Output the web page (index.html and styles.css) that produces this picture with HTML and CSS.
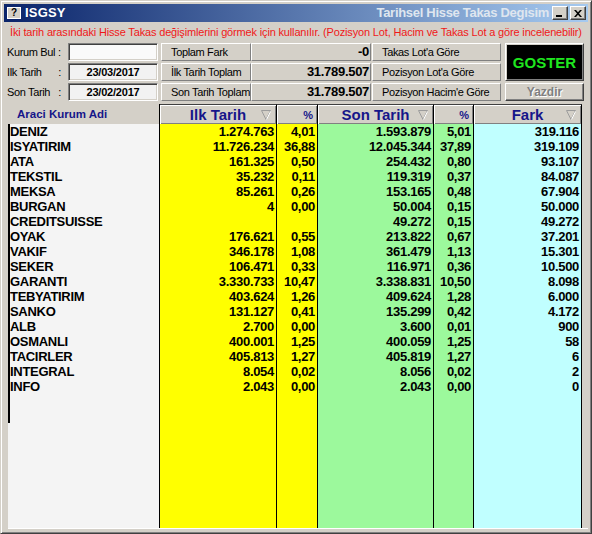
FILE: index.html
```html
<!DOCTYPE html>
<html lang="tr">
<head>
<meta charset="utf-8">
<title>ISGSY</title>
<link rel="stylesheet" href="styles.css">
</head>
<body>
<div class="window">
  <div class="titlebar">
    <span class="app-icon">?</span>
    <span class="title">ISGSY</span>
    <span class="subtitle">Tarihsel Hisse Takas Degisim</span>
    <span class="tbtn"><svg width="8" height="7" viewBox="0 0 8 7"><rect x="0" y="5" width="6" height="2" fill="#000"/></svg></span>
    <span class="tbtn"><svg width="8" height="7" viewBox="0 0 8 7"><path d="M0 0h2l2 2.3L6 0h2L5 3.5 8 7H6L4 4.7 2 7H0l3-3.5z" fill="#000"/></svg></span>
  </div>
  <div class="client">
    <p class="hint">İki tarih arasındaki Hisse Takas değişimlerini görmek için kullanılır. (Pozisyon Lot, Hacim ve Takas Lot a göre incelenebilir)</p>
    <div class="controls">
      <span class="lbl">Kurum Bul :</span>
      <div class="field blank"></div>
      <div class="btn">Toplam Fark</div>
      <div class="val">-0</div>
      <div class="btn wide">Takas Lot'a Göre</div>
      <div class="goster">GOSTER</div>

      <span class="lbl">Ilk Tarih<span class="colon">:</span></span>
      <div class="field">23/03/2017</div>
      <div class="btn">İlk Tarih Toplam</div>
      <div class="val">31.789.507</div>
      <div class="btn wide">Pozisyon Lot'a Göre</div>

      <span class="lbl">Son Tarih<span class="colon">:</span></span>
      <div class="field">23/02/2017</div>
      <div class="btn">Son Tarih Toplam</div>
      <div class="val">31.789.507</div>
      <div class="btn wide">Pozisyon Hacim'e Göre</div>
      <div class="btn yazdir">Yazdir</div>
    </div>
    <div class="panel">
      <div class="table">
        <div class="h-name">Araci Kurum Adi</div>
        <div class="h"><span></span><span>Ilk Tarih</span><svg class="sort" width="10" height="10" viewBox="0 0 10 10"><path d="M0.5 0.5H9.5L5 9.5Z" fill="none" stroke="#9c9c9c"/><path d="M9.5 1.5L5.5 9.5" stroke="#fff"/></svg></div>
        <div class="h-pct">%</div>
        <div class="h"><span></span><span>Son Tarih</span><svg class="sort" width="10" height="10" viewBox="0 0 10 10"><path d="M0.5 0.5H9.5L5 9.5Z" fill="none" stroke="#9c9c9c"/><path d="M9.5 1.5L5.5 9.5" stroke="#fff"/></svg></div>
        <div class="h-pct">%</div>
        <div class="h"><span></span><span>Fark</span><svg class="sort" width="10" height="10" viewBox="0 0 10 10"><path d="M0.5 0.5H9.5L5 9.5Z" fill="none" stroke="#9c9c9c"/><path d="M9.5 1.5L5.5 9.5" stroke="#fff"/></svg></div>

        <div class="c name">DENIZ</div><div class="c y">1.274.763</div><div class="c y">4,01</div><div class="c g">1.593.879</div><div class="c g">5,01</div><div class="c cy">319.116</div>
        <div class="c name">ISYATIRIM</div><div class="c y">11.726.234</div><div class="c y">36,88</div><div class="c g">12.045.344</div><div class="c g">37,89</div><div class="c cy">319.109</div>
        <div class="c name">ATA</div><div class="c y">161.325</div><div class="c y">0,50</div><div class="c g">254.432</div><div class="c g">0,80</div><div class="c cy">93.107</div>
        <div class="c name">TEKSTIL</div><div class="c y">35.232</div><div class="c y">0,11</div><div class="c g">119.319</div><div class="c g">0,37</div><div class="c cy">84.087</div>
        <div class="c name">MEKSA</div><div class="c y">85.261</div><div class="c y">0,26</div><div class="c g">153.165</div><div class="c g">0,48</div><div class="c cy">67.904</div>
        <div class="c name">BURGAN</div><div class="c y">4</div><div class="c y">0,00</div><div class="c g">50.004</div><div class="c g">0,15</div><div class="c cy">50.000</div>
        <div class="c name">CREDITSUISSE</div><div class="c y"></div><div class="c y"></div><div class="c g">49.272</div><div class="c g">0,15</div><div class="c cy">49.272</div>
        <div class="c name">OYAK</div><div class="c y">176.621</div><div class="c y">0,55</div><div class="c g">213.822</div><div class="c g">0,67</div><div class="c cy">37.201</div>
        <div class="c name">VAKIF</div><div class="c y">346.178</div><div class="c y">1,08</div><div class="c g">361.479</div><div class="c g">1,13</div><div class="c cy">15.301</div>
        <div class="c name">SEKER</div><div class="c y">106.471</div><div class="c y">0,33</div><div class="c g">116.971</div><div class="c g">0,36</div><div class="c cy">10.500</div>
        <div class="c name">GARANTI</div><div class="c y">3.330.733</div><div class="c y">10,47</div><div class="c g">3.338.831</div><div class="c g">10,50</div><div class="c cy">8.098</div>
        <div class="c name">TEBYATIRIM</div><div class="c y">403.624</div><div class="c y">1,26</div><div class="c g">409.624</div><div class="c g">1,28</div><div class="c cy">6.000</div>
        <div class="c name">SANKO</div><div class="c y">131.127</div><div class="c y">0,41</div><div class="c g">135.299</div><div class="c g">0,42</div><div class="c cy">4.172</div>
        <div class="c name">ALB</div><div class="c y">2.700</div><div class="c y">0,00</div><div class="c g">3.600</div><div class="c g">0,01</div><div class="c cy">900</div>
        <div class="c name">OSMANLI</div><div class="c y">400.001</div><div class="c y">1,25</div><div class="c g">400.059</div><div class="c g">1,25</div><div class="c cy">58</div>
        <div class="c name">TACIRLER</div><div class="c y">405.813</div><div class="c y">1,27</div><div class="c g">405.819</div><div class="c g">1,27</div><div class="c cy">6</div>
        <div class="c name">INTEGRAL</div><div class="c y">8.054</div><div class="c y">0,02</div><div class="c g">8.056</div><div class="c g">0,02</div><div class="c cy">2</div>
        <div class="c name">INFO</div><div class="c y">2.043</div><div class="c y">0,00</div><div class="c g">2.043</div><div class="c g">0,00</div><div class="c cy">0</div>

        <div class="c name-fill"><div class="mark"></div></div><div class="c y"></div><div class="c y"></div><div class="c g"></div><div class="c g"></div><div class="c cy"></div>
      </div>
    </div>
  </div>
</div>
</body>
</html>
```

FILE: styles.css
```css
html, body {
  margin: 0;
  padding: 0;
  background: #d4d0c8;
}

body {
  font-family: "Liberation Sans", Arial, sans-serif;
}

.window {
  width: 592px;
  height: 534px;
  box-sizing: border-box;
  background: #d4d0c8;
  border: 1px solid;
  border-color: #d4d0c8 #404040 #404040 #d4d0c8;
  box-shadow: inset 1px 1px #ffffff, inset -1px -1px #808080;
  padding: 3px;
  display: flex;
  flex-direction: column;
}

/* ---------- title bar ---------- */
.titlebar {
  height: 18px;
  flex: none;
  display: flex;
  align-items: center;
  padding: 0 2px 0 3px;
  background: linear-gradient(to right, #0a246a, #a6caf0);
  overflow: hidden;
}

.app-icon {
  width: 12px;
  height: 10px;
  flex: none;
  background: #d4d0c8;
  border: 1px solid #ffffff;
  color: #000;
  font: bold 10px/10px "Liberation Sans", Arial, sans-serif;
  text-align: center;
}

.title {
  margin-left: 4px;
  color: #ffffff;
  font: bold 13px/18px "Liberation Sans", Arial, sans-serif;
  letter-spacing: 0.2px;
  flex: none;
}

.subtitle {
  margin-left: auto;
  margin-right: 1px;
  flex: none;
  white-space: nowrap;
  color: #dfe6ef;
  font: bold 13px/18px "Liberation Sans", Arial, sans-serif;
  letter-spacing: -0.3px;
}

.tbtn {
  width: 14px;
  height: 12px;
  flex: none;
  margin-left: 2px;
  background: #d4d0c8;
  border: 1px solid;
  border-color: #ffffff #404040 #404040 #ffffff;
  box-shadow: inset -1px -1px #808080;
  display: flex;
  align-items: center;
  justify-content: center;
}

/* ---------- client ---------- */
.client {
  flex: 1;
  display: flex;
  flex-direction: column;
  padding: 0 0 0 3px;
  min-height: 0;
}

.hint {
  margin: 3px 0 0 3px;
  height: 14px;
  font-size: 11px;
  line-height: 14px;
  color: #f01818;
  white-space: nowrap;
  letter-spacing: -0.16px;
}

.controls {
  margin-top: 4px;
  display: grid;
  grid-template-columns: 61px 93px 90px 121px 133px 79px;
  grid-template-rows: repeat(3, 18px);
  row-gap: 2px;
  font-size: 11px;
  letter-spacing: -0.35px;
}

.lbl {
  display: flex;
  align-items: center;
  white-space: nowrap;
  color: #000;
}

.colon {
  margin-left: auto;
  margin-right: 7px;
}

.field {
  width: 90px;
  box-sizing: border-box;
  background: #f2f2f2;
  border: 1px solid;
  border-color: #808080 #ffffff #ffffff #808080;
  box-shadow: inset 1px 1px #404040, inset -1px -1px #d4d0c8;
  font-weight: bold;
  letter-spacing: -0.2px;
  text-align: center;
  line-height: 16px;
}

.field.blank {
  background: #fafafa;
}

.btn {
  box-sizing: border-box;
  border: 1px solid;
  border-color: #ffffff #808080 #808080 #ffffff;
  background: #d4d0c8;
  padding-left: 9px;
  line-height: 16px;
  white-space: nowrap;
  overflow: hidden;
}

.btn.wide {
  width: 129px;
}

.val {
  width: 120px;
  box-sizing: border-box;
  border: 1px solid;
  border-color: #ffffff #808080 #808080 #ffffff;
  background: #d4d0c8;
  text-align: right;
  padding-right: 1px;
  font-weight: bold;
  font-size: 13px;
  letter-spacing: -0.3px;
  line-height: 16px;
}

.goster {
  grid-column: 6;
  grid-row: 1 / span 2;
  box-sizing: border-box;
  border: 1px solid;
  border-color: #ffffff #404040 #404040 #ffffff;
  box-shadow: inset 1px 1px #d4d0c8, inset -1px -1px #808080;
  background: #000;
  color: #1fe61f;
  font-size: 15px;
  font-weight: bold;
  letter-spacing: 0;
  display: flex;
  align-items: center;
  justify-content: center;
}

.yazdir {
  grid-column: 6;
  grid-row: 3;
  padding: 0;
  text-align: center;
  font-weight: bold;
  font-size: 12px;
  letter-spacing: 0;
  color: #808080;
  text-shadow: 1px 1px #ffffff;
  border-color: #ffffff #404040 #404040 #ffffff;
  box-shadow: inset -1px -1px #808080;
}

/* ---------- grid ---------- */
.panel {
  flex: 1;
  min-height: 0;
  margin-top: 3px;
  margin-left: 1px;
  display: flex;
  border-bottom: 1px solid #ffffff;
  margin-bottom: 1px;
}

.table {
  display: grid;
  grid-template-columns: 152px 117px 41px 116px 40px 108px;
  grid-template-rows: 20px repeat(18, 15px) 1fr;
  height: 424px;
}

.h-name {
  background: #d4d0c8;
  border-right: 1px solid #000;
  color: #16168a;
  font-weight: bold;
  font-size: 11.5px;
  padding-left: 9px;
  display: flex;
  align-items: center;
}

.h {
  background: #d4d0c8;
  border-right: 1px solid #000;
  border-top: 1px solid #404040;
  box-shadow: inset 1px 1px #ffffff, inset -1px -1px #808080;
  display: grid;
  grid-template-columns: 1fr auto 1fr;
  align-items: center;
  color: #16168a;
  font-weight: bold;
  font-size: 15px;
  white-space: nowrap;
}

.sort {
  justify-self: end;
  margin-right: 5px;
}

.h-pct {
  background: #d4d0c8;
  border-right: 1px solid #000;
  border-top: 1px solid #404040;
  box-shadow: inset 1px 1px #ffffff, inset -1px -1px #808080;
  color: #16168a;
  font-weight: bold;
  font-size: 11px;
  text-align: right;
  padding-right: 4px;
  display: flex;
  align-items: center;
  justify-content: flex-end;
}

.c {
  border-right: 1px solid #000;
  font-weight: bold;
  font-size: 13px;
  line-height: 15px;
  letter-spacing: -0.3px;
  color: #000;
  text-align: right;
  padding-right: 2px;
  white-space: nowrap;
  overflow: hidden;
}

.name {
  text-align: left;
  background: #f4f4f4;
  border-left: 2px solid #000;
  padding-right: 0;
}

.name-fill {
  background: #f4f4f4;
  padding: 0;
}

.mark {
  width: 2px;
  height: 29px;
  background: #000;
}

.y { background: #ffff00; }
.g { background: #9cf99c; }
.cy { background: #c0ffff; }
```
